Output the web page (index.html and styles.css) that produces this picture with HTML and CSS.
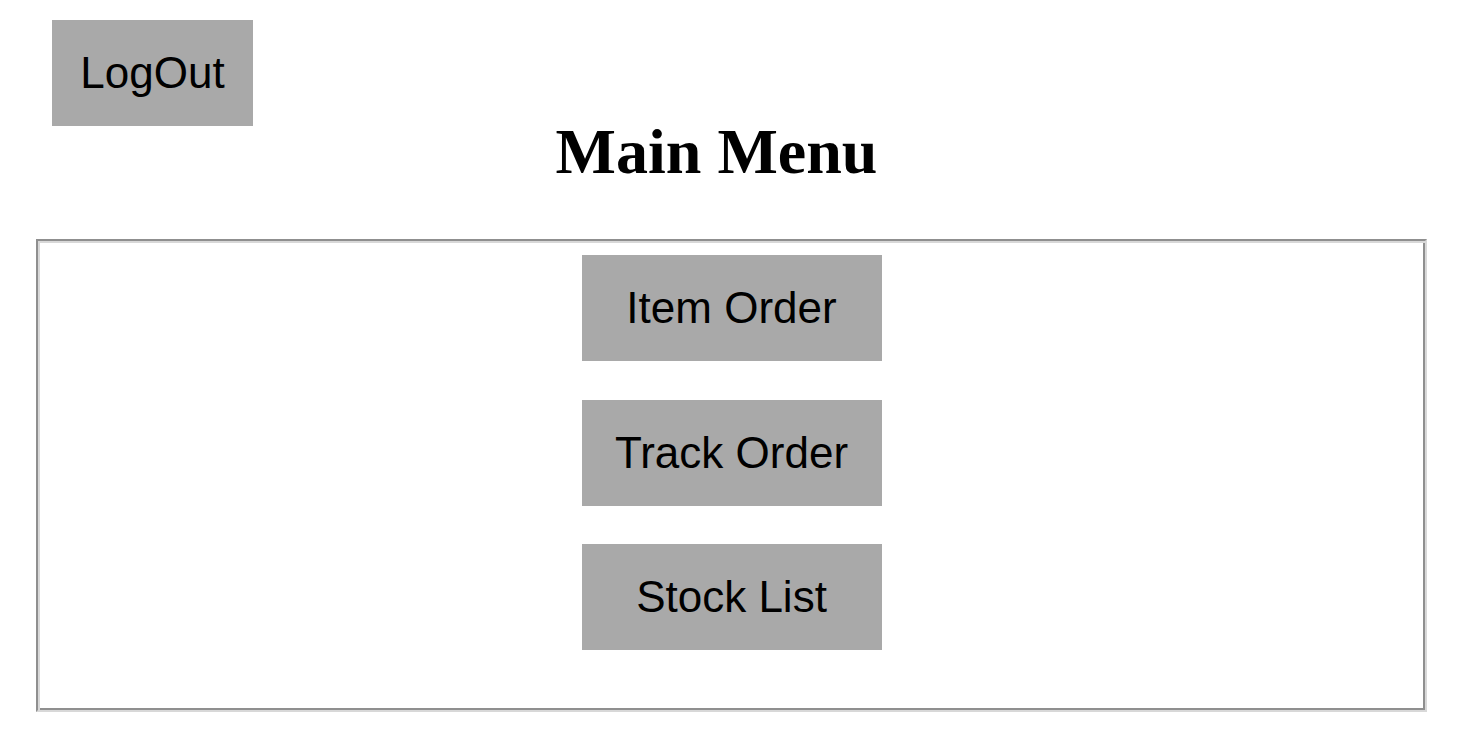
FILE: index.html
```html
<!DOCTYPE html>
<html>
<head>
<meta charset="utf-8">
<title>Main Menu</title>
<link rel="stylesheet" href="styles.css">
</head>
<body>
<div class="page">
  <div class="topbar">
    <button class="btn logout">LogOut</button>
  </div>
  <h1 class="title">Main Menu</h1>
  <div class="menu">
    <button class="btn menu-btn">Item Order</button>
    <button class="btn menu-btn">Track Order</button>
    <button class="btn menu-btn">Stock List</button>
  </div>
</div>
</body>
</html>
```

FILE: styles.css
```css
html, body {
  margin: 0;
  padding: 0;
  background: #ffffff;
}

.page {
  padding-top: 20px;
  font-family: "Liberation Sans", Arial, sans-serif;
}

.topbar {
  display: flex;
  padding-left: 52px;
}

.btn {
  font-family: "Liberation Sans", Arial, sans-serif;
  font-size: 44px;
  color: #000000;
  background: #a9a9a9;
  border: none;
  margin: 0;
  height: 106px;
  display: flex;
  align-items: center;
  justify-content: center;
}

.logout {
  width: 201px;
  padding: 0;
}

.title {
  margin: 0;
  padding-right: 43px;
  font-family: "Liberation Serif", "Times New Roman", serif;
  font-weight: bold;
  font-size: 64px;
  line-height: 51px;
  text-align: center;
  color: #000000;
}

.menu {
  margin: 62px 49px 0 36px;
  border: 2px solid;
  border-color: #8f8f8f #d8d8d8 #d8d8d8 #8f8f8f;
  box-shadow: inset 2px 2px 0 #d8d8d8, inset -2px -2px 0 #8f8f8f;
  padding: 14px 2px 60px;
  display: flex;
  flex-direction: column;
  align-items: center;
  gap: 38.5px;
}

.menu-btn {
  width: 300px;
  padding: 0;
}
```
